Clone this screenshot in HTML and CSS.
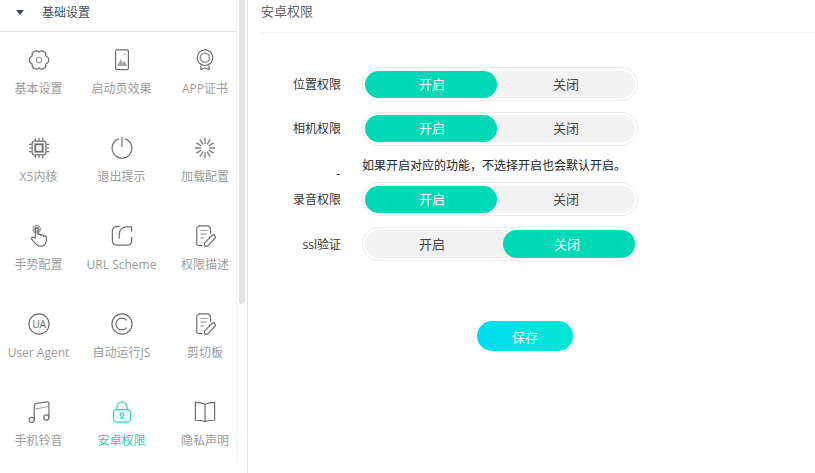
FILE: index.html
```html
<!DOCTYPE html>
<html lang="zh">
<head>
<meta charset="utf-8">
<title>安卓权限</title>
<link rel="stylesheet" href="styles.css">
</head>
<body>
<aside class="side">
  <div class="side-main">
    <div class="group-head"><span class="caret"></span><span>基础设置</span></div>
    <div class="grid">
      <div class="item"><svg class="ico" viewBox="0 0 24 24"><path d="M12 3.300A4.600 4.600 0 0 1 19.500 7.650A4.600 4.600 0 0 1 19.500 16.350A4.600 4.600 0 0 1 12 20.700A4.600 4.600 0 0 1 4.500 16.350A4.600 4.600 0 0 1 4.500 7.650A4.600 4.600 0 0 1 12 3.300z"/><circle class="lt" cx="12" cy="12" r="3"/></svg><span>基本设置</span></div>
      <div class="item"><svg class="ico" viewBox="0 0 24 24"><rect x="5" y="1" width="14" height="21.500" rx="1.500"/><circle class="fill-lt" cx="15" cy="5.500" r="1"/><path class="fill-lt" d="M6.500 18.500l4-7.500 2.500 4 1.500-2 3.500 5.500z"/></svg><span>启动页效果</span></div>
      <div class="item"><svg class="ico" viewBox="0 0 24 24"><circle cx="12" cy="9.500" r="8.500"/><circle class="lt" cx="12" cy="9.500" r="5" stroke-width="2"/><path d="M7.500 18v4.500l4.500-2 4.500 2V18"/></svg><span>APP证书</span></div>

      <div class="item"><svg class="ico" viewBox="0 0 24 24"><rect x="4.500" y="4.500" width="15" height="15" rx="2.500"/><rect x="8" y="8" width="8" height="8" stroke-width="2"/><path d="M8 1v3M12 1v3M16 1v3M8 20v3M12 20v3M16 20v3M1 8h3M1 12h3M1 16h3M20 8h3M20 12h3M20 16h3"/></svg><span>X5内核</span></div>
      <div class="item"><svg class="ico" viewBox="0 0 24 24"><path d="M8.500 2a10.800 10.800 0 1 0 7 0M12 0v11"/></svg><span>退出提示</span></div>
      <div class="item"><svg class="ico spin" viewBox="0 0 24 24"><path d="M12 1v6.500M17.500 2.500l-3.200 5.500M21.500 6.500l-5.500 3.200M23 12h-6.500M21.500 17.500l-5.500-3.200M17.500 21.500l-3.200-5.500M12 23v-6.500M6.500 21.500l3.200-5.500M2.500 17.500l5.500-3.200M1 12h6.500M2.500 6.500l5.500 3.200M6.500 2.500l3.200 5.500"/></svg><span>加载配置</span></div>

      <div class="item"><svg class="ico" viewBox="0 0 24 24"><circle class="lt" cx="9.500" cy="4.500" r="4"/><circle class="lt" cx="9.500" cy="4.500" r="2.500"/><path d="M8 14V4.500c0-1.800 3-1.800 3 0V11c0-1.500 3-1.500 3 0v1c0-1.500 3-1.500 3 0v1c0-1.500 3-1.500 3 0v4c0 3-2 6-5 6h-2c-3 0-4-1.500-5.500-3.500l-3.500-4c-1-1.500 1-3 2.500-1.800z"/></svg><span>手势配置</span></div>
      <div class="item"><svg class="ico" viewBox="0 0 24 24"><path d="M9 1.500H7C3.500 1.500 1.500 3.500 1.500 7v9.500C1.500 20 3.500 22 7 22h10c3.500 0 5.500-2 5.500-5.500V13M22.500 7V2H17C12.500 2 9 5.500 9 10v5"/></svg><span>URL Scheme</span></div>
      <div class="item"><svg class="ico" viewBox="0 0 24 24"><path d="M9 22.500H6.500c-2 0-3.500-1.500-3.500-3.500V4.500C3 2.500 4.500 1 6.500 1h8c2 0 3.500 1.500 3.500 3.500v5"/><path class="lt" d="M7 6h8M7 10h7M7 14h4"/><path d="M11.500 23v-3.500l8-8c1-1 2.500-1 3.300 0 .7.800.7 2 0 3l-8 8.500z"/></svg><span>权限描述</span></div>

      <div class="item"><svg class="ico" viewBox="0 0 24 24"><circle cx="12" cy="12" r="11"/><text class="glyph" x="12" y="16">UA</text></svg><span>User Agent</span></div>
      <div class="item"><svg class="ico" viewBox="0 0 24 24"><circle cx="12" cy="12" r="11"/><path d="M17 8a6.500 6.500 0 1 0 0 8"/></svg><span>自动运行JS</span></div>
      <div class="item"><svg class="ico" viewBox="0 0 24 24"><path d="M9 22.500H6.500c-2 0-3.500-1.500-3.500-3.500V4.500C3 2.500 4.500 1 6.500 1h8c2 0 3.500 1.500 3.500 3.500v5"/><path class="lt" d="M7 6h8M7 10h7M7 14h4"/><path d="M11.500 23v-3.500l8-8c1-1 2.500-1 3.300 0 .7.800.7 2 0 3l-8 8.500z"/></svg><span>剪切板</span></div>

      <div class="item"><svg class="ico" viewBox="0 0 24 24"><circle cx="4" cy="20.500" r="2.800"/><circle cx="20" cy="18" r="2.800"/><path d="M6.800 20.500V5c0-1.500 1-2.300 2.200-2.500L21 1c1-.1 1.800.5 1.800 1.500V18"/><path class="lt" d="M7 9l15.500-3"/></svg><span>手机铃音</span></div>
      <div class="item active"><svg class="ico" viewBox="0 0 24 24"><rect x="2.750" y="9.500" width="18.500" height="13.500" rx="3.500"/><path d="M6.500 9.500V6.500a5.500 5.500 0 0 1 11 0v3"/><path d="M12 13a2 2 0 0 1 1 3.700V19h-2v-2.300A2 2 0 0 1 12 13z"/></svg><span>安卓权限</span></div>
      <div class="item"><svg class="ico" viewBox="0 0 24 24"><path d="M12 3.500C9 2 5 1.500 1.500 1.500v19.500c3.500 0 7.500.2 10.500 1.500 3-1.300 7-1.500 10.500-1.500V1.500C19 1.500 15 2 12 3.500zM12 3.500v19"/></svg><span>隐私声明</span></div>
    </div>
  </div>
  <div class="rail"><div class="thumb"></div></div>
</aside>
<main class="main">
  <h1 class="title">安卓权限</h1>
  <form class="form">
    <div class="row"><label class="lab">位置权限</label><div class="toggle"><div class="track"><span class="opt on">开启</span><span class="opt">关闭</span></div></div></div>
    <div class="row up"><label class="lab">相机权限</label><div class="toggle"><div class="track"><span class="opt on">开启</span><span class="opt">关闭</span></div></div></div>
    <div class="hint-row"><span class="dash">-</span><span class="hint">如果开启对应的功能，不选择开启也会默认开启。</span></div>
    <div class="row"><label class="lab">录音权限</label><div class="toggle"><div class="track"><span class="opt on">开启</span><span class="opt">关闭</span></div></div></div>
    <div class="row"><label class="lab">ssl验证</label><div class="toggle right"><div class="track"><span class="opt">开启</span><span class="opt on">关闭</span></div></div></div>
    <div class="actions"><button class="save" type="button">保存</button></div>
  </form>
</main>
</body>
</html>
```
FILE: styles.css
```css
* { box-sizing: border-box; }
html, body { height: 100%; }
body {
  margin: 0;
  display: flex;
  height: 473px;
  overflow: hidden;
  background: #fff;
  font-family: "Open Sans", "Noto Sans CJK SC", sans-serif;
  font-size: 12px;
  color: #222;
}
.side {
  width: 248px;
  flex: none;
  display: flex;
  border-right: 1px solid #e4e4e4;
}
.side-main {
  width: 237px;
  height: 463px;
  flex: none;
  border-right: 1px solid #f0f0f0;
  overflow: hidden;
}
.group-head {
  height: 32px;
  padding: 0 0 7px 16px;
  display: flex;
  align-items: center;
  border-bottom: 1px solid #e5e5e5;
  color: #44505c;
}
.caret {
  width: 0;
  height: 0;
  margin-right: 18px;
  border-left: 4px solid transparent;
  border-right: 4px solid transparent;
  border-top: 5px solid #3d4a5c;
}
.grid {
  display: grid;
  grid-template-columns: 77px 89px 78px;
  grid-auto-rows: 88px;
  padding-top: 17px;
}
.item {
  display: flex;
  flex-direction: column;
  align-items: center;
  gap: 9px;
  color: #9c9c9c;
  line-height: 18px;
  white-space: nowrap;
}
.item.active { color: #14d3c6; }
.ico {
  width: 22px;
  height: 22px;
  flex: none;
  fill: none;
  stroke: #6e6e6e;
  stroke-width: 1.300;
  overflow: visible;
}
.ico .lt { stroke: #a0a0a0; }
.ico .fill-lt { fill: #a8a8a8; stroke: none; }
.ico .glyph {
  fill: #6e6e6e;
  stroke: none;
  font-size: 11.500px;
  letter-spacing: -.4px;
  text-anchor: middle;
}
.ico.spin { stroke: #808080; stroke-width: 1.500; }
.active .ico { stroke: #2bd8ca; }
.rail {
  width: 10px;
  padding: 0 2px;
}
.thumb {
  width: 6px;
  height: 304px;
  background: #e3e3e3;
  border-radius: 0 0 3px 3px;
}
.main {
  flex: 1;
  padding-left: 13px;
  min-width: 0;
}
.title {
  margin: 0;
  height: 33px;
  padding-bottom: 12px;
  display: flex;
  align-items: center;
  font-size: 13px;
  font-weight: 400;
  color: #666;
  border-bottom: 1px solid #f2f2f2;
}
.form { padding-top: 34px; }
.row {
  display: flex;
  align-items: center;
  height: 34px;
  margin-bottom: 11px;
}
.lab {
  width: 80px;
  text-align: right;
  margin-right: 21px;
  color: #333;
}
.row.up .lab { padding-bottom: 2px; }
.toggle {
  width: 276px;
  height: 34px;
  padding: 3px 2px 2px;
  border: 1px solid #ececec;
  border-radius: 17px;
  display: flex;
}
.row.up .toggle { padding: 2px 2px 3px; }
.toggle.right { padding: 2px; }
.track {
  flex: 1;
  display: flex;
  background: #f2f2f2;
  border-radius: 14px;
}
.opt {
  flex: 1;
  display: flex;
  align-items: center;
  justify-content: center;
  padding-bottom: 2px;
  font-size: 13px;
  color: #444;
}
.opt.on {
  flex: none;
  width: 132px;
  padding-left: 2px;
  background: #00d8b6;
  color: #fff;
  border-radius: 14px;
}
.toggle.right .opt { padding: 0 4px 2px 0; }
.hint-row {
  display: flex;
  height: 27px;
  margin-top: -2px;
}
.dash { width: 79px; text-align: right; margin-right: 22px; line-height: 30px; padding-top: 4px; }
.hint { color: #222; line-height: 18px; padding-top: 2px; }
.actions { padding: 49px 0 0 216px; }
.save {
  display: block;
  width: 96px;
  height: 30px;
  border: 0;
  border-radius: 15px;
  background: linear-gradient(90deg, #00dcf2, #00e6d2);
  color: #fff;
  font: inherit;
  font-size: 13px;
}
```
